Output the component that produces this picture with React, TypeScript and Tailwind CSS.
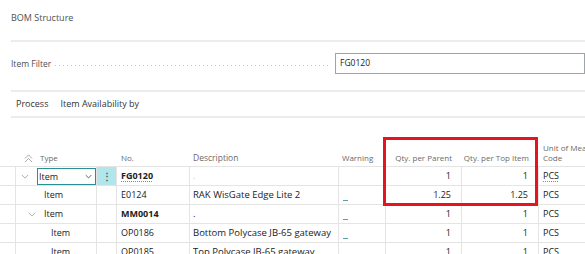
import React from "react";

interface Row {
  level: number;
  expand?: boolean;
  selected?: boolean;
  no: string;
  bold?: boolean;
  desc: string;
  warn: boolean;
  qp: string;
  qt: string;
  uom: string;
}

const rows: Row[] = [
  { level: 0, expand: true, selected: true, no: "FG0120", bold: true, desc: ".", warn: false, qp: "1", qt: "1", uom: "PCS" },
  { level: 1, no: "E0124", desc: "RAK WisGate Edge Lite 2", warn: true, qp: "1.25", qt: "1.25", uom: "PCS" },
  { level: 1, expand: true, no: "MM0014", bold: true, desc: ".", warn: true, qp: "1", qt: "1", uom: "PCS" },
  { level: 2, no: "OP0186", desc: "Bottom Polycase JB-65 gateway", warn: true, qp: "1", qt: "1", uom: "PCS" },
  { level: 2, no: "OP0185", desc: "Top Polycase JB-65 gateway", warn: true, qp: "1", qt: "1", uom: "PCS" },
];

const indent = ["pl-[2px]", "pl-[9px]", "pl-[16px]"];

function ChevronDown({ className }: { className?: string }) {
  return (
    <svg viewBox="0 0 10 6" className={className} fill="none" stroke="currentColor" strokeWidth="1">
      <path d="M1 1l4 4 4-4" />
    </svg>
  );
}

function CollapseAll() {
  return (
    <svg viewBox="0 0 10 10" className="h-[9px] w-[9px] text-[#a0a0a0]" fill="none" stroke="currentColor" strokeWidth="1">
      <path d="M1 5l4-4 4 4M1 9l4-4 4 4" />
    </svg>
  );
}

export default function App() {
  return (
    <div className="relative h-[254px] w-[585px] overflow-hidden bg-white font-['Segoe_UI','Open_Sans',sans-serif] text-[#212121]">
      {/* Title */}
      <div className="h-[40px] pl-[11px] pt-[11px] text-[9px] leading-[14px] text-[#505050]">BOM Structure</div>
      <div className="ml-[11px] h-[2px] bg-[#ececec]" />

      {/* Filter */}
      <div className="flex h-[48px] items-start pl-[11px] pt-[11px]">
        <div className="flex h-[21px] w-[324px] items-center">
          <span className="text-[8.5px] leading-[12px] text-[#505050]">Item Filter</span>
          <div className="ml-[4px] mr-[6px] mt-[3px] h-px flex-1 bg-[linear-gradient(to_right,#c4c4c4_1px,transparent_1px)] bg-[length:4px_1px] bg-repeat-x" />
        </div>
        <div className="flex h-[21px] flex-1 items-center border border-[#a0a4a8] pl-[4px] text-[8.5px] text-[#212121]">FG0120</div>
      </div>
      <div className="ml-[11px] h-[2px] bg-[#ececec]" />

      {/* Action bar */}
      <div className="flex h-[24px] items-center gap-[12px] pl-[16px] text-[9px] text-[#333]">
        <span>Process</span>
        <span>Item Availability by</span>
      </div>
      <div className="ml-[11px] h-[2px] bg-[#ececec]" />

      {/* Table header */}
      <div className="flex h-[49px] items-end border-b border-[#e4e4e4] pb-[3px] text-[8px] leading-[10px] text-[#6a6a6a]">
        <div className="w-[16px] shrink-0" />
        <div className="flex w-[81px] shrink-0 items-center">
          <span className="ml-[5px] flex w-[14px] justify-center">
            <CollapseAll />
          </span>
          <span className="ml-[5px]">Type</span>
        </div>
        <div className="w-[20px] shrink-0" />
        <div className="w-[73px] shrink-0 px-[4px]">No.</div>
        <div className="w-[149px] shrink-0 px-[3px] text-[8.5px]">Description</div>
        <div className="w-[47px] shrink-0 px-[3px]">Warning</div>
        <div className="w-[76px] shrink-0 pr-[10px] text-right">Qty. per Parent</div>
        <div className="w-[77px] shrink-0 pr-[10px] text-right">Qty. per Top Item</div>
        <div className="flex-1 whitespace-nowrap pl-[4px]">
          Unit of Measure
          <br />
          Code
        </div>
      </div>

      {/* Rows */}
      {rows.map((r) => (
        <div key={r.no} className="flex h-[19px] border-b border-[#e4e4e4] text-[9px] leading-[18px]">
          <div className="w-[16px] shrink-0 border-r border-[#e4e4e4]" />
          <div className={`flex w-[81px] shrink-0 items-center border-r border-[#e4e4e4] ${indent[r.level]}`}>
            <span className="flex w-[14px] shrink-0 justify-center">
              {r.expand && <ChevronDown className="h-[5px] w-[8px] text-[#9a9a9a]" />}
            </span>
            {r.selected ? (
              <div className="ml-[5px] flex h-[17px] flex-1 items-center justify-between border border-[#2a8f94] pl-[1px] pr-[3px] leading-[15px]">
                <span>Item</span>
                <ChevronDown className="h-[5px] w-[7px] text-[#222]" />
              </div>
            ) : (
              <span className="ml-[5px]">Item</span>
            )}
          </div>
          <div className={`flex w-[20px] shrink-0 items-center justify-center border-r border-[#e4e4e4] ${r.selected ? "bg-[#b3e6ea]" : ""}`}>
            {r.selected && <span className="text-[10px] font-bold leading-[10px] text-[#3a6d70]">⋮</span>}
          </div>
          <div className={`w-[73px] shrink-0 border-r border-[#e4e4e4] px-[4px] ${r.bold ? "font-bold" : ""}`}>
            <span className={r.selected ? "underline decoration-dotted decoration-[#888] underline-offset-2" : ""}>{r.no}</span>
          </div>
          <div className={`w-[149px] shrink-0 border-r border-[#e4e4e4] px-[3px] text-[9.5px] ${r.selected ? "text-[#f0c090]" : ""}`}>{r.desc}</div>
          <div className="relative w-[47px] shrink-0 border-r border-[#e4e4e4] px-[3px]">
            {r.warn && <span className="absolute bottom-[3px] left-[4px] h-px w-[5px] bg-[#5a9fa3]" />}
          </div>
          <div className="w-[76px] shrink-0 border-r border-[#e4e4e4] pr-[10px] text-right">{r.qp}</div>
          <div className="w-[77px] shrink-0 border-r border-[#e4e4e4] pr-[10px] text-right">{r.qt}</div>
          <div className="flex-1 pl-[4px]">
            <span className={r.selected ? "underline decoration-dotted decoration-[#888] underline-offset-2" : ""}>{r.uom}</span>
          </div>
        </div>
      ))}

      {/* Annotation box */}
      <div className="absolute left-[383px] top-[137px] h-[69px] w-[155px] border-[3px] border-[#e5141e]" />
    </div>
  );
}
